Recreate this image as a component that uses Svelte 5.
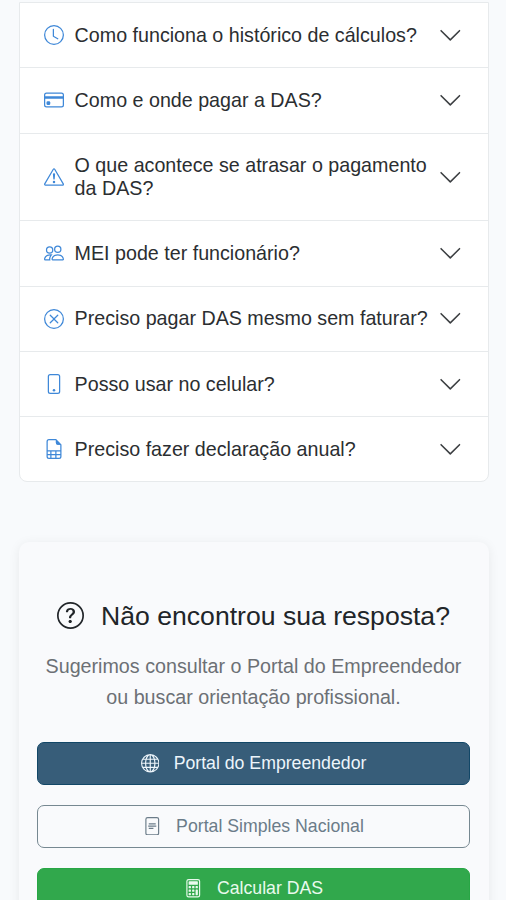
<script lang="ts">
  let openItem: number | null = null;

  const questions = [
    { icon: 'clock', text: 'Como funciona o histórico de cálculos?' },
    { icon: 'card', text: 'Como e onde pagar a DAS?' },
    { icon: 'warning', text: 'O que acontece se atrasar o pagamento da DAS?' },
    { icon: 'people', text: 'MEI pode ter funcionário?' },
    { icon: 'cancel', text: 'Preciso pagar DAS mesmo sem faturar?' },
    { icon: 'phone', text: 'Posso usar no celular?' },
    { icon: 'sheet', text: 'Preciso fazer declaração anual?' }
  ];

  const icons: Record<string, string[]> = {
    clock: [
      'M8 3.5a.5.5 0 0 0-1 0V9a.5.5 0 0 0 .252.434l3.5 2a.5.5 0 0 0 .496-.868L8 8.71z',
      'M8 16A8 8 0 1 0 8 0a8 8 0 0 0 0 16m7-8A7 7 0 1 1 1 8a7 7 0 0 1 14 0'
    ],
    card: [
      'M0 4a2 2 0 0 1 2-2h12a2 2 0 0 1 2 2v8a2 2 0 0 1-2 2H2a2 2 0 0 1-2-2zm2-1a1 1 0 0 0-1 1v1h14V4a1 1 0 0 0-1-1zm13 4H1v5a1 1 0 0 0 1 1h12a1 1 0 0 0 1-1z',
      'M2 10a1 1 0 0 1 1-1h1a1 1 0 0 1 1 1v1a1 1 0 0 1-1 1H3a1 1 0 0 1-1-1z'
    ],
    warning: [
      'M7.938 2.016A.13.13 0 0 1 8.002 2a.13.13 0 0 1 .063.016.15.15 0 0 1 .054.057l6.857 11.667c.036.06.035.124.002.183a.2.2 0 0 1-.054.06.1.1 0 0 1-.066.017H1.146a.1.1 0 0 1-.066-.017.2.2 0 0 1-.054-.06.18.18 0 0 1 .002-.183L7.884 2.073a.15.15 0 0 1 .054-.057m1.044-.45a1.13 1.13 0 0 0-1.96 0L.165 13.233c-.457.778.091 1.767.98 1.767h13.713c.889 0 1.438-.99.98-1.767z',
      'M7.002 12a1 1 0 1 1 2 0 1 1 0 0 1-2 0M7.1 5.995a.905.905 0 1 1 1.8 0l-.35 3.507a.552.552 0 0 1-1.1 0z'
    ],
    people: [
      'M15 14s1 0 1-1-1-4-5-4-5 3-5 4 1 1 1 1zm-7.978-1L7 12.996c.001-.264.167-1.03.76-1.72C8.312 10.629 9.282 10 11 10c1.717 0 2.687.63 3.24 1.276.593.69.758 1.457.76 1.72l-.008.002-.014.002zM11 7a2 2 0 1 0 0-4 2 2 0 0 0 0 4m3-2a3 3 0 1 1-6 0 3 3 0 0 1 6 0M6.936 9.28a6 6 0 0 0-1.23-.247A7 7 0 0 0 5 9c-4 0-5 3-5 4q0 1 1 1h4.216A2.24 2.24 0 0 1 5 13c0-1.01.377-2.042 1.09-2.904.243-.294.526-.569.846-.816M4.92 10A5.5 5.5 0 0 0 4 13H1c0-.26.164-1.03.76-1.724.545-.636 1.492-1.256 3.16-1.275ZM1.5 5.5a3 3 0 1 1 6 0 3 3 0 0 1-6 0m3-2a2 2 0 1 0 0 4 2 2 0 0 0 0-4'
    ],
    cancel: [
      'M8 15A7 7 0 1 1 8 1a7 7 0 0 1 0 14m0 1A8 8 0 1 0 8 0a8 8 0 0 0 0 16',
      'M4.646 4.646a.5.5 0 0 1 .708 0L8 7.293l2.646-2.647a.5.5 0 0 1 .708.708L8.707 8l2.647 2.646a.5.5 0 0 1-.708.708L8 8.707l-2.646 2.647a.5.5 0 0 1-.708-.708L7.293 8 4.646 5.354a.5.5 0 0 1 0-.708'
    ],
    phone: [
      'M11 1a1 1 0 0 1 1 1v12a1 1 0 0 1-1 1H5a1 1 0 0 1-1-1V2a1 1 0 0 1 1-1zM5 0a2 2 0 0 0-2 2v12a2 2 0 0 0 2 2h6a2 2 0 0 0 2-2V2a2 2 0 0 0-2-2z',
      'M8 14a1 1 0 1 0 0-2 1 1 0 0 0 0 2'
    ],
    sheet: [
      'M14 14V4.5L9.5 0H4a2 2 0 0 0-2 2v12a2 2 0 0 0 2 2h8a2 2 0 0 0 2-2M9.5 3A1.5 1.5 0 0 0 11 4.5h2V9H3V2a1 1 0 0 1 1-1h5.5zM3 12v-2h2v2zm0 1h2v2H4a1 1 0 0 1-1-1zm3 2v-2h3v2zm4 0v-2h3v1a1 1 0 0 1-1 1zm3-3h-3v-2h3zm-7 0v-2h3v2z',
      'M9.5 0 14 4.5h-3A1.5 1.5 0 0 1 9.5 3z'
    ],
    question: [
      'M8 15A7 7 0 1 1 8 1a7 7 0 0 1 0 14m0 1A8 8 0 1 0 8 0a8 8 0 0 0 0 16',
      'M5.255 5.786a.237.237 0 0 0 .241.247h.825c.138 0 .248-.113.266-.25.09-.656.54-1.134 1.342-1.134.686 0 1.314.343 1.314 1.168 0 .635-.374.927-.965 1.371-.673.489-1.206 1.06-1.168 1.987l.003.217a.25.25 0 0 0 .25.246h.811a.25.25 0 0 0 .25-.25v-.105c0-.718.273-.927 1.01-1.486.609-.463 1.244-.977 1.244-2.056 0-1.511-1.276-2.241-2.673-2.241-1.267 0-2.655.59-2.75 2.286m1.557 5.763c0 .533.425.927 1.01.927.609 0 1.028-.394 1.028-.927 0-.552-.42-.94-1.029-.94-.584 0-1.009.388-1.009.94'
    ],
    globe: [
      'M0 8a8 8 0 1 1 16 0A8 8 0 0 1 0 8m7.5-6.923c-.67.204-1.335.82-1.887 1.855A8 8 0 0 0 5.145 4H7.5zM4.09 4a9.3 9.3 0 0 1 .64-1.539 7 7 0 0 1 .597-.933A7.03 7.03 0 0 0 2.255 4zm-.582 3.5c.03-.877.138-1.718.312-2.5H1.674a7 7 0 0 0-.656 2.5zM4.847 5a12.5 12.5 0 0 0-.338 2.5H7.5V5zM8.5 5v2.5h2.99a12.5 12.5 0 0 0-.337-2.5zM4.51 8.5a12.5 12.5 0 0 0 .337 2.5H7.5V8.5zm3.99 0V11h2.653c.187-.765.306-1.608.338-2.5zM5.145 12q.208.58.468 1.068c.552 1.035 1.218 1.65 1.887 1.855V12zm.182 2.472a7 7 0 0 1-.597-.933A9.3 9.3 0 0 1 4.09 12H2.255a7 7 0 0 0 3.072 2.472M3.82 11a13.7 13.7 0 0 1-.312-2.5h-2.49c.062.89.291 1.733.656 2.5zm6.853 3.472A7 7 0 0 0 13.745 12H11.91a9.3 9.3 0 0 1-.64 1.539 7 7 0 0 1-.597.933M8.5 12v2.923c.67-.204 1.335-.82 1.887-1.855q.26-.487.468-1.068zm3.68-1h2.146c.365-.767.594-1.61.656-2.5h-2.49a13.7 13.7 0 0 1-.312 2.5m2.802-3.5a7 7 0 0 0-.656-2.5H12.18c.174.782.282 1.623.312 2.5zM11.27 2.461c.247.464.462.98.64 1.539h1.835a7 7 0 0 0-3.072-2.472c.218.284.418.598.597.933M10.855 4a8 8 0 0 0-.468-1.068C9.835 1.897 9.17 1.282 8.5 1.077V4z'
    ],
    file: [
      'M4 0h8a2 2 0 0 1 2 2v12a2 2 0 0 1-2 2H4a2 2 0 0 1-2-2V2a2 2 0 0 1 2-2m0 1a1 1 0 0 0-1 1v12a1 1 0 0 0 1 1h8a1 1 0 0 0 1-1V2a1 1 0 0 0-1-1z',
      'M5 5.5h6v1H5zM4.5 7.300h7v1.200h-7zM5 9.300h4v1H5z'
    ],
    calculator: [
      'M12 1a1 1 0 0 1 1 1v12a1 1 0 0 1-1 1H4a1 1 0 0 1-1-1V2a1 1 0 0 1 1-1zM4 0a2 2 0 0 0-2 2v12a2 2 0 0 0 2 2h8a2 2 0 0 0 2-2V2a2 2 0 0 0-2-2z',
      'M4 2.5a.5.5 0 0 1 .5-.5h7a.5.5 0 0 1 .5.5v2a.5.5 0 0 1-.5.5h-7a.5.5 0 0 1-.5-.5zm0 4a.5.5 0 0 1 .5-.5h1a.5.5 0 0 1 .5.5v1a.5.5 0 0 1-.5.5h-1a.5.5 0 0 1-.5-.5zm0 3a.5.5 0 0 1 .5-.5h1a.5.5 0 0 1 .5.5v1a.5.5 0 0 1-.5.5h-1a.5.5 0 0 1-.5-.5zm0 3a.5.5 0 0 1 .5-.5h1a.5.5 0 0 1 .5.5v1a.5.5 0 0 1-.5.5h-1a.5.5 0 0 1-.5-.5zm3-6a.5.5 0 0 1 .5-.5h1a.5.5 0 0 1 .5.5v1a.5.5 0 0 1-.5.5h-1a.5.5 0 0 1-.5-.5zm0 3a.5.5 0 0 1 .5-.5h1a.5.5 0 0 1 .5.5v1a.5.5 0 0 1-.5.5h-1a.5.5 0 0 1-.5-.5zm0 3a.5.5 0 0 1 .5-.5h1a.5.5 0 0 1 .5.5v1a.5.5 0 0 1-.5.5h-1a.5.5 0 0 1-.5-.5zm3-6a.5.5 0 0 1 .5-.5h1a.5.5 0 0 1 .5.5v1a.5.5 0 0 1-.5.5h-1a.5.5 0 0 1-.5-.5zm0 3a.5.5 0 0 1 .5-.5h1a.5.5 0 0 1 .5.5v4a.5.5 0 0 1-.5.5h-1a.5.5 0 0 1-.5-.5z'
    ]
  };

  const actions = [
    { icon: 'globe', text: 'Portal do Empreendedor', kind: 'primary' },
    { icon: 'file', text: 'Portal Simples Nacional', kind: 'outline' },
    { icon: 'calculator', text: 'Calcular DAS', kind: 'success' }
  ];

  function toggle(i: number) {
    openItem = openItem === i ? null : i;
  }
</script>

<main>
  <div class="accordion">
    {#each questions as q, i}
      <button class="question" aria-expanded={openItem === i} on:click={() => toggle(i)}>
        <svg class="icon" viewBox="0 0 16 16" fill="currentColor" aria-hidden="true">
          {#each icons[q.icon] as d}<path {d} />{/each}
        </svg>
        <span>{q.text}</span>
        <svg class="chevron" class:open={openItem === i} viewBox="0 0 16 16" aria-hidden="true">
          <path d="m2 5 6 6 6-6" />
        </svg>
      </button>
    {/each}
  </div>

  <section class="help">
    <h2>
      <svg class="help-icon" viewBox="0 0 16 16" fill="currentColor" aria-hidden="true">
        {#each icons.question as d}<path {d} />{/each}
      </svg>
      Não encontrou sua resposta?
    </h2>
    <p>Sugerimos consultar o Portal do Empreendedor ou buscar orientação profissional.</p>
    <div class="actions">
      {#each actions as a}
        <button class="btn {a.kind}">
          <svg class="btn-icon" viewBox="0 0 16 16" fill="currentColor" aria-hidden="true">
            {#each icons[a.icon] as d}<path {d} />{/each}
          </svg>
          {a.text}
        </button>
      {/each}
    </div>
  </section>
</main>

<style>
  :global(body) { background: #f8fafc; }
  main {
    height: 900px;
    overflow: hidden;
    box-sizing: border-box;
    padding: 2px 17.5px 0 18.5px;
    font-family: "Liberation Sans", Arial, sans-serif;
    color: #212529;
  }
  button { font-family: inherit; cursor: pointer; }
  .accordion {
    border: 1px solid #e7eaec;
    border-radius: 0 0 8px 8px;
    background: white;
    overflow: hidden;
  }
  .question {
    display: flex;
    align-items: center;
    width: 100%;
    box-sizing: border-box;
    min-height: 65.3px;
    padding: 19.7px 25px 19.7px 24.6px;
    border: 0;
    border-bottom: 1px solid #e7eaec;
    background: transparent;
    color: #2b2e31;
    font-size: 19.68px;
    line-height: 23.4px;
    text-align: left;
  }
  .question:last-child { border-bottom: 0; min-height: 64.3px; }
  .question span { flex: 1; min-width: 0; padding-top: 0.5px; }
  .icon {
    flex: none;
    width: 20px;
    height: 20px;
    margin-right: 10.5px;
    color: #3f88d8;
  }
  .chevron {
    flex: none;
    width: 24.6px;
    height: 24.6px;
    fill: none;
    stroke: #3c3f42;
    stroke-linecap: round;
    stroke-linejoin: round;
  }
  .chevron.open { transform: rotate(180deg); }
  .help {
    margin-top: 60px;
    padding: 57.5px 18.5px 60px;
    border-radius: 10px;
    background: #f9fafc;
    box-shadow: 0 2px 12px rgba(0, 0, 0, 0.07);
    text-align: center;
  }
  h2 {
    display: flex;
    justify-content: center;
    align-items: center;
    margin: 0 0 19px;
    font-size: 26.6px;
    font-weight: 400;
    line-height: 32px;
  }
  .help-icon { width: 27px; height: 27px; margin-right: 17px; }
  p {
    margin: 0 0 29.5px;
    color: #6c7075;
    font-size: 19.7px;
    line-height: 31px;
  }
  .actions { display: flex; flex-direction: column; gap: 19.6px; }
  .btn {
    display: flex;
    justify-content: center;
    align-items: center;
    box-sizing: border-box;
    height: 43px;
    border: 1px solid;
    border-radius: 7px;
    padding: 0 0 1px;
    font-size: 17.7px;
  }
  .btn-icon { width: 18.5px; height: 18.5px; margin-right: 14.5px; }
  .primary { background: #375d79; border-color: #124767; color: #edf5fb; }
  .outline { background: transparent; border-color: #768891; color: #6b7c89; }
  .success { background: #31a84c; border-color: #28a745; color: #e9faed; }
</style>
